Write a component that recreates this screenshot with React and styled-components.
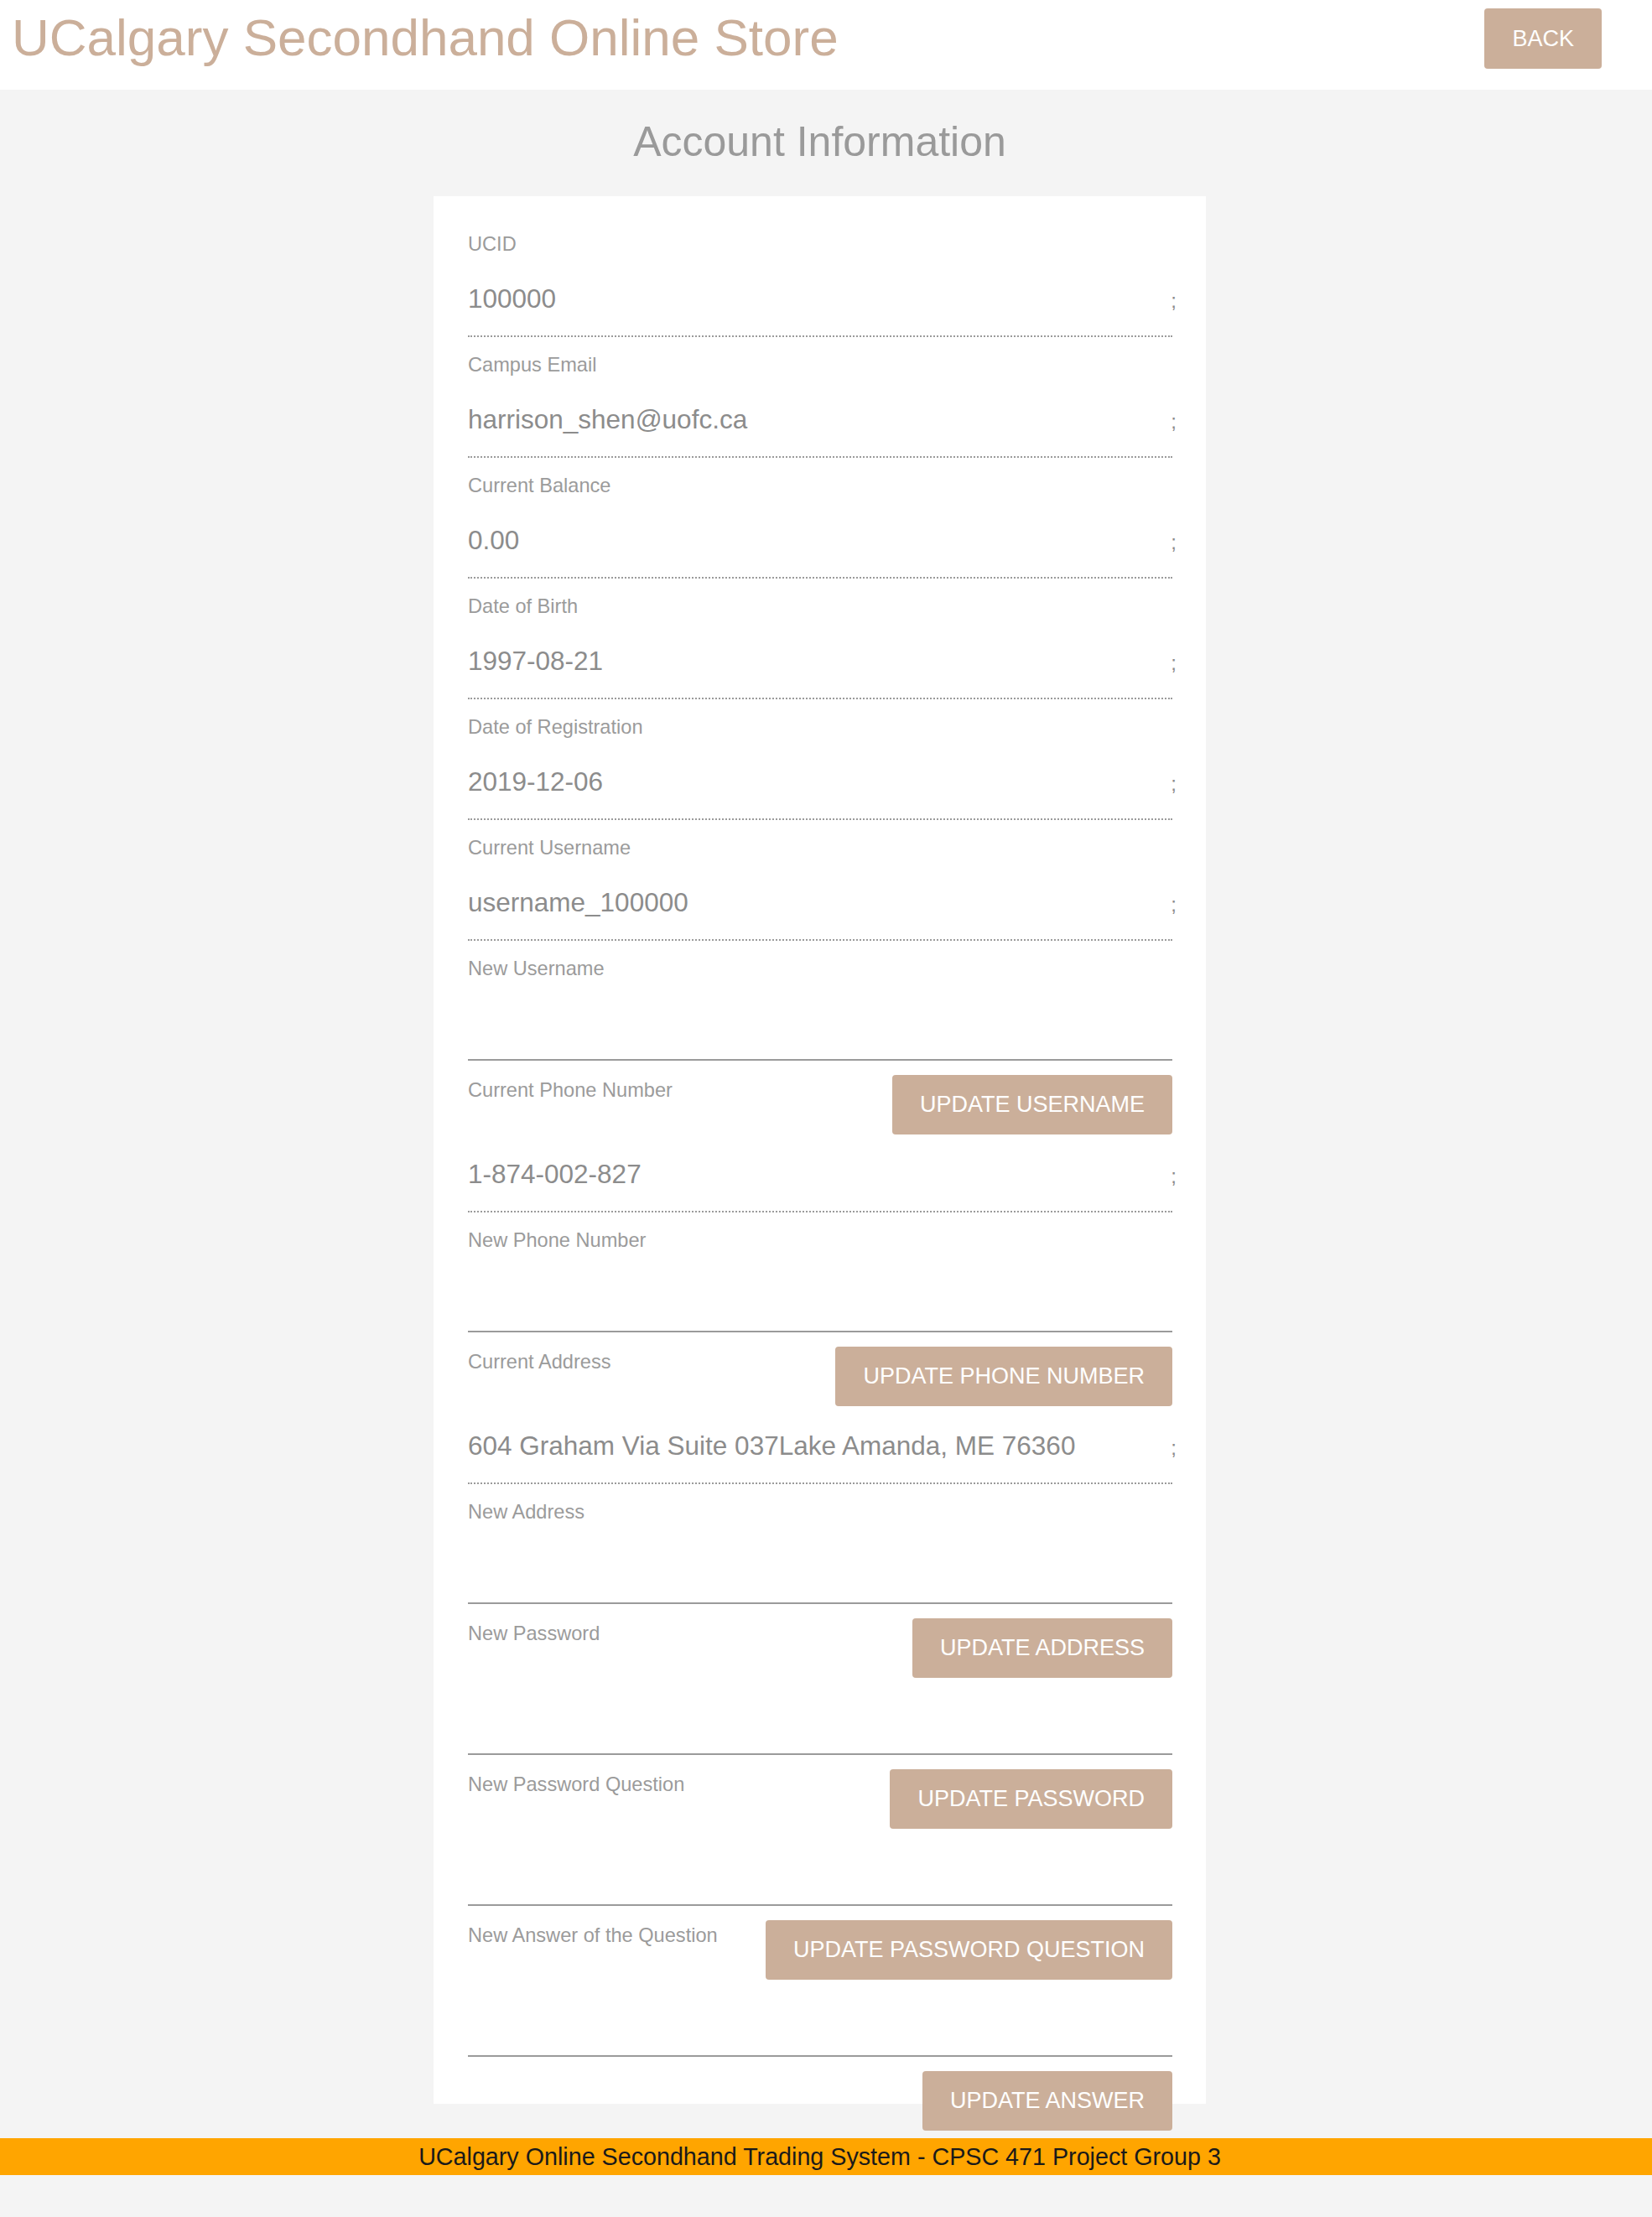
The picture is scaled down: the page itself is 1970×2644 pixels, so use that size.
import styled, { createGlobalStyle } from "styled-components";

const GlobalStyle = createGlobalStyle`
  html, body {
    margin: 0;
    padding: 0;
    background-color: #f4f4f4;
    font-family: "Liberation Sans", Arial, sans-serif;
  }

  #root {
    min-height: 2644px;
  }

  * {
    box-sizing: border-box;
  }
`;

const TopBar = styled.header`
  display: flex;
  justify-content: space-between;
  align-items: flex-start;
  height: 107px;
  padding: 10px 60px 0 14px;
  background-color: #ffffff;
`;

const StoreTitle = styled.h1`
  margin: 0;
  font-size: 62px;
  font-weight: 400;
  line-height: 70px;
  color: #cbaf9a;
`;

const Button = styled.button`
  height: ${(props) => (props.$tall ? 72 : 71)}px;
  padding: 0 33px;
  border: none;
  border-radius: 4px;
  background-color: #cbaf9a;
  color: #ffffff;
  font-family: inherit;
  font-size: 27px;
  text-transform: uppercase;
  white-space: nowrap;
  cursor: pointer;
`;

const Main = styled.main`
  padding-right: 15px;
`;

const PageHeading = styled.h2`
  margin: 34px 0 36px;
  text-align: center;
  font-size: 50px;
  font-weight: 400;
  line-height: 57px;
  color: #9a9a9a;
`;

// flow-root keeps the last button's negative margin inside, so it hangs over the card edge
const Card = styled.section`
  display: flow-root;
  width: 921px;
  margin: 0 auto;
  padding: 44px 40px 0 41px;
  background-color: #ffffff;
`;

const Label = styled.label`
  display: block;
  margin: ${(props) => props.$offset || 0}px 0 ${(props) => props.$after || 0}px;
  font-size: 23.6px;
  line-height: 27px;
  color: #9b9b9b;
`;

const ValueLine = styled.div`
  display: flex;
  justify-content: space-between;
  align-items: baseline;
  margin-top: ${(props) => props.$gap}px;
  margin-bottom: 20px;
  padding-bottom: 25px;
  border-bottom: 2px dotted #9b9b9b;
`;

const Value = styled.span`
  font-size: 31.5px;
  line-height: 37px;
  color: #8c8c8c;
`;

const Semicolon = styled.span`
  margin-right: -5px;
  font-size: 24px;
  line-height: 27px;
  color: #8c8c8c;
`;

const TextInput = styled.input`
  display: block;
  width: 100%;
  height: 92px;
  margin: 0;
  padding: 0;
  border: none;
  border-bottom: 2px solid #9b9b9b;
  background: transparent;
  font-family: inherit;
  font-size: 32px;
  color: #8c8c8c;
  outline: none;
`;

const ActionRow = styled.div`
  display: flex;
  justify-content: space-between;
  align-items: flex-start;
  margin-top: 17px;
`;

const LastAction = styled.div`
  display: flex;
  justify-content: flex-end;
  margin-top: 17px;
  margin-bottom: -32px;
`;

const Footer = styled.footer`
  margin-top: 41px;
  height: 44px;
  padding-right: 15px;
  background-color: #ffa500;
  text-align: center;
  font-size: 28.7px;
  line-height: 44px;
  color: #1a1a1a;
`;

const accountInfo = [
  { label: "UCID", value: "100000" },
  { label: "Campus Email", value: "harrison_shen@uofc.ca" },
  { label: "Current Balance", value: "0.00" },
  { label: "Date of Birth", value: "1997-08-21" },
  { label: "Date of Registration", value: "2019-12-06" },
  { label: "Current Username", value: "username_100000" },
];

function ShownValue({ value, gap }) {
  return (
    <ValueLine $gap={gap}>
      <Value>{value}</Value>
      <Semicolon>;</Semicolon>
    </ValueLine>
  );
}

function ReadField({ label, value }) {
  return (
    <div>
      <Label>{label}</Label>
      <ShownValue value={value} gap={33} />
    </div>
  );
}

function EditField({ label, type = "text" }) {
  return (
    <div>
      <Label $after={4}>{label}</Label>
      <TextInput type={type} />
    </div>
  );
}

// the label of the next field sits beside the button of the previous one
function LabelWithAction({ label, action }) {
  return (
    <ActionRow>
      <Label $offset={5}>{label}</Label>
      <Button>{action}</Button>
    </ActionRow>
  );
}

export default function App() {
  return (
    <>
      <GlobalStyle />
      <TopBar>
        <StoreTitle>UCalgary Secondhand Online Store</StoreTitle>
        <Button $tall>Back</Button>
      </TopBar>

      <Main>
        <PageHeading>Account Information</PageHeading>
        <Card>
          {accountInfo.map((field) => (
            <ReadField key={field.label} label={field.label} value={field.value} />
          ))}

          <EditField label="New Username" />
          <LabelWithAction label="Current Phone Number" action="Update Username" />
          <ShownValue value="1-874-002-827" gap={29} />

          <EditField label="New Phone Number" />
          <LabelWithAction label="Current Address" action="Update Phone Number" />
          <ShownValue value="604 Graham Via Suite 037Lake Amanda, ME 76360" gap={29} />

          <EditField label="New Address" />
          <LabelWithAction label="New Password" action="Update Address" />
          <TextInput type="password" />

          <LabelWithAction label="New Password Question" action="Update Password" />
          <TextInput type="text" />

          <LabelWithAction label="New Answer of the Question" action="Update Password Question" />
          <TextInput type="text" />

          <LastAction>
            <Button>Update Answer</Button>
          </LastAction>
        </Card>
      </Main>

      <Footer>UCalgary Online Secondhand Trading System - CPSC 471 Project Group 3</Footer>
    </>
  );
}
